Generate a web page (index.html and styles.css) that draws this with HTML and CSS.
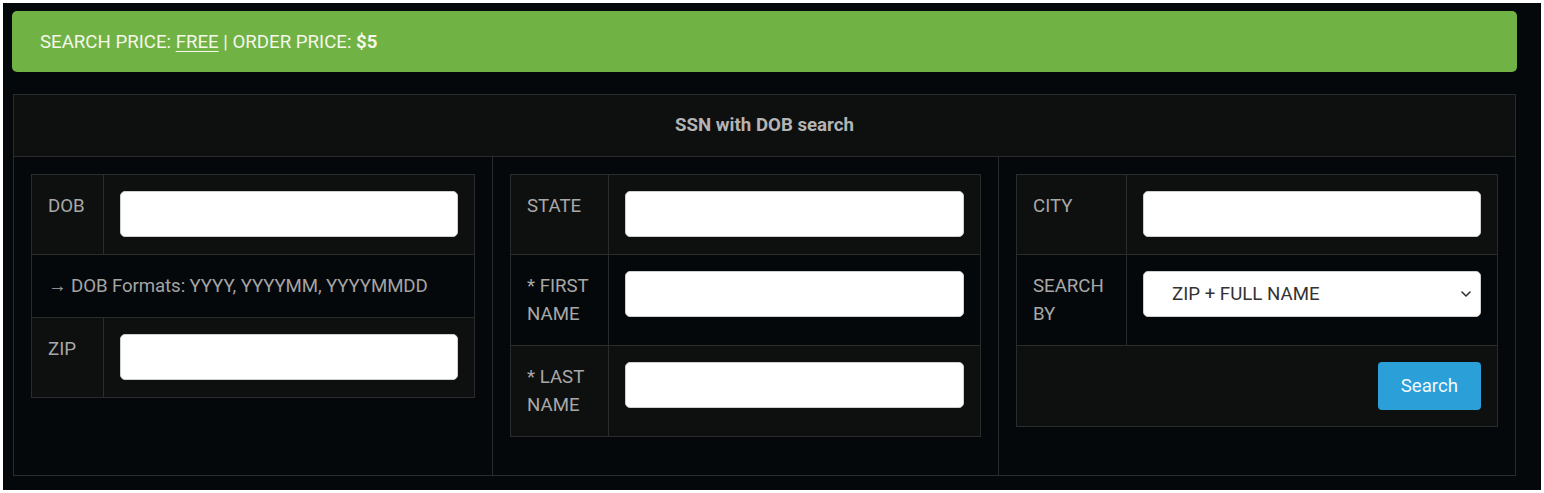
FILE: index.html
```html
<!DOCTYPE html>
<html lang="en">

<head>
    <meta charset="UTF-8">
    <meta name="viewport" content="width=device-width, initial-scale=1.0">
    <title>SSN with DOB search</title>
    <link rel="stylesheet" href="styles.css">
</head>

<body>
    <div class="page">
        <div class="price-bar">
            SEARCH PRICE: <u>FREE</u> | ORDER PRICE: <b>$5</b>
        </div>

        <div class="panel">
            <div class="panel-title">SSN with DOB search</div>

            <div class="panel-body">
                <!-- column 1 -->
                <div class="panel-col">
                    <table class="field-table dob-table">
                        <tr>
                            <th>DOB</th>
                            <td><input type="text"></td>
                        </tr>
                        <tr>
                            <td colspan="2" class="hint">&rarr; DOB Formats: YYYY, YYYYMM, YYYYMMDD</td>
                        </tr>
                        <tr>
                            <th>ZIP</th>
                            <td><input type="text"></td>
                        </tr>
                    </table>
                </div>

                <!-- column 2 -->
                <div class="panel-col">
                    <table class="field-table name-table">
                        <tr>
                            <th>STATE</th>
                            <td><input type="text"></td>
                        </tr>
                        <tr>
                            <th>* FIRST NAME</th>
                            <td><input type="text"></td>
                        </tr>
                        <tr>
                            <th>* LAST NAME</th>
                            <td><input type="text"></td>
                        </tr>
                    </table>
                </div>

                <!-- column 3 -->
                <div class="panel-col">
                    <table class="field-table city-table">
                        <tr>
                            <th>CITY</th>
                            <td><input type="text"></td>
                        </tr>
                        <tr>
                            <th>SEARCH BY</th>
                            <td>
                                <div class="select-wrap">
                                    <select>
                                        <option>ZIP + FULL NAME</option>
                                        <option>CITY + FULL NAME</option>
                                        <option>STATE + FULL NAME</option>
                                    </select>
                                    <svg class="select-arrow" width="10" height="6" viewBox="0 0 10 6">
                                        <path d="M1 1l4 4 4-4" fill="none" stroke="#333" stroke-width="1.6" stroke-linecap="round" stroke-linejoin="round"/>
                                    </svg>
                                </div>
                            </td>
                        </tr>
                        <tr>
                            <td colspan="2" class="actions"><button type="button" class="btn-search">Search</button></td>
                        </tr>
                    </table>
                </div>
            </div>
        </div>
    </div>
</body>

</html>
```

FILE: styles.css
```css
* {
    margin: 0;
    padding: 0;
    box-sizing: border-box;
}

html,
body {
    height: 100%;
}

body {
    background-color: #fff;
    padding: 3px;
    font-family: Roboto, "Liberation Sans", Arial, sans-serif;
    font-size: 18.67px;
    line-height: 28px;
}

.page {
    height: 100%;
    display: flex;
    flex-direction: column;
    background-color: #05080a;
    padding: 8px 24px 14px 9px;
}

.price-bar {
    background-color: #70b244;
    color: #f4f7ea;
    border-radius: 5px;
    padding: 17px 28px 16px;
}

.price-bar u {
    text-underline-offset: 3px;
}

.panel {
    flex: 1;
    display: flex;
    flex-direction: column;
    margin: 22px 1px 0;
    border: 1px solid #2a2b2b;
}

.panel-title {
    background-color: #0e0f0f;
    color: #b4b4b4;
    font-weight: bold;
    text-align: center;
    padding: 16px 16px 17px;
    border-bottom: 1px solid #2a2b2b;
}

.panel-body {
    flex: 1;
    display: grid;
    grid-template-columns: 478px 506px 1fr;
}

.panel-col {
    padding: 17px;
}

.panel-col + .panel-col {
    border-left: 1px solid #2a2b2b;
}

.field-table {
    width: 100%;
    border-collapse: collapse;
    table-layout: fixed;
    border: 1px solid #2a2b2b;
}

.field-table tr:nth-child(odd) {
    background-color: #0e0f0f;
}

.field-table th,
.field-table td {
    border: 1px solid #2a2b2b;
    padding: 17px 16px;
    vertical-align: top;
}

.field-table th {
    font-weight: normal;
    text-align: left;
    color: #a8a8a8;
}

.dob-table th {
    width: 72px;
}

.name-table th {
    width: 98px;
}

.city-table th {
    width: 110px;
}

.field-table .hint {
    color: #a4a4a4;
    letter-spacing: -0.1px;
}

.field-table input,
.field-table select {
    display: block;
    width: 100%;
    height: 46px;
    margin-top: -1px;
    background-color: #fff;
    border: 1px solid #cfcfcf;
    border-radius: 5px;
    font: inherit;
    color: #333;
}

.select-wrap {
    position: relative;
}

.field-table select {
    appearance: none;
    -webkit-appearance: none;
    padding: 0 32px 0 28px;
}

.select-arrow {
    position: absolute;
    right: 10px;
    top: 20px;
}

.actions {
    text-align: right;
}

.btn-search {
    display: inline-block;
    height: 48px;
    margin-top: -1px;
    margin-bottom: -1px;
    padding: 0 23px;
    border: none;
    border-radius: 4px;
    background-color: #2a9fd8;
    color: #f2f8fc;
    font: inherit;
    vertical-align: top;
}
```
